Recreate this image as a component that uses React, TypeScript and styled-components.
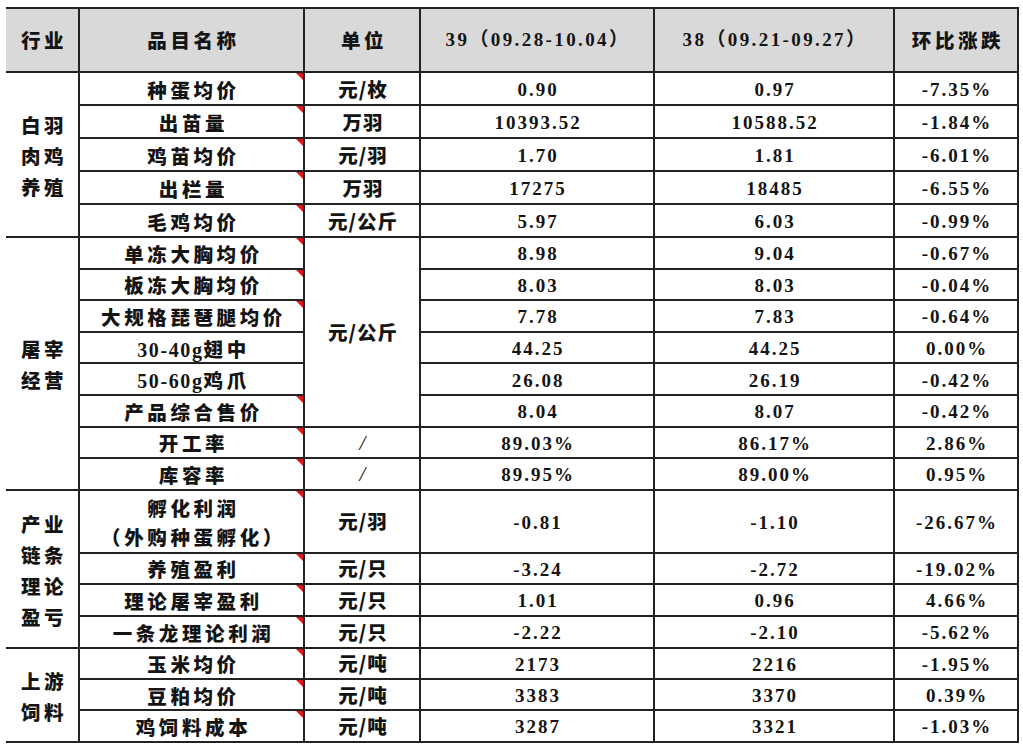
import React from "react";
import styled, { createGlobalStyle } from "styled-components";

const GlobalStyle = createGlobalStyle`
  html, body { margin: 0; padding: 0; background: #ffffff; }
  body { font-family: "Liberation Serif", "Noto Sans CJK SC", serif; }
`;

const Page = styled.div`
  padding: 7px 6px 0 6px;
  width: 1023px;
  box-sizing: border-box;
`;

const Table = styled.table`
  border-collapse: collapse;
  table-layout: fixed;
  width: 1012px;
  color: #141414;
`;

const HeadCell = styled.th<{ $cjk?: boolean }>`
  background: #d9d9d9;
  height: 62px;
  border-top: 2px solid #222;
  border-bottom: 2px solid #222;
  border-left: 2px solid #222;
  padding: ${(p) => (p.$cjk ? "0 0 0 4px" : "0 0 0 2px")};
  line-height: 24px;
  font-weight: ${(p) => (p.$cjk ? 900 : 700)};
  font-size: ${(p) => (p.$cjk ? "19.5px" : "19px")};
  letter-spacing: ${(p) => (p.$cjk ? "3.6px" : "2.4px")};
  font-family: ${(p) =>
    p.$cjk ? `"Noto Sans CJK SC", sans-serif` : `"Liberation Serif", "Noto Sans CJK SC", serif`};
  text-align: center;
  &:first-child { border-left: none; }
  &:last-child { border-right: 2px solid #222; }
`;

const Row = styled.tr<{ $h: number }>`
  height: ${(p) => p.$h}px;
`;

const GroupCell = styled.td`
  border-bottom: 2px solid #222;
  padding: 2px 0 0 4px;
  text-align: center;
  vertical-align: middle;
  font-family: "Noto Sans CJK SC", sans-serif;
  font-weight: 900;
  font-size: 19.5px;
  letter-spacing: 3.6px;
  line-height: 31px;
`;

const NameCell = styled.td<{ $double?: boolean }>`
  position: relative;
  border: 2px solid #222;
  padding: 2px 0 0 4px;
  text-align: center;
  vertical-align: middle;
  font-family: "Noto Sans CJK SC", sans-serif;
  font-weight: 900;
  font-size: 19.5px;
  letter-spacing: 3.6px;
  line-height: ${(p) => (p.$double ? "29px" : "24px")};
  white-space: nowrap;
`;

const Latin = styled.span`
  font-family: "Liberation Serif", serif;
  font-weight: 700;
  font-size: 20px;
  letter-spacing: 1.6px;
  line-height: 20px;
`;

const Mark = styled.span`
  position: absolute;
  top: 0;
  right: 0;
  width: 0;
  height: 0;
  border-top: 7px solid #e0161c;
  border-left: 7px solid transparent;
`;

const UnitCell = styled.td`
  border: 2px solid #222;
  padding: 2px 0 0 2px;
  text-align: center;
  vertical-align: middle;
  white-space: nowrap;
  font-size: 19.5px;
  line-height: 24px;
`;

const UnitText = styled.span<{ $slash?: boolean }>`
  font-family: ${(p) => (p.$slash ? `"Liberation Serif", serif` : `"Noto Sans CJK SC", sans-serif`)};
  font-weight: ${(p) => (p.$slash ? 400 : 900)};
  font-size: ${(p) => (p.$slash ? "21px" : "19.5px")};
  font-style: ${(p) => (p.$slash ? "italic" : "normal")};
  letter-spacing: 1px;
`;

const NumCell = styled.td`
  border: 2px solid #222;
  padding: 3px 0 0 2px;
  text-align: center;
  vertical-align: middle;
  font-family: "Liberation Serif", serif;
  font-weight: 700;
  font-size: 19px;
  line-height: 22px;
  letter-spacing: 2px;
  white-space: nowrap;
`;

type Item = {
  name: React.ReactNode;
  unit?: string;
  unitSpan?: number;
  a: string;
  b: string;
  c: string;
  mark: boolean;
  h: number;
  double?: boolean;
};

type Group = { label: string[]; items: Item[] };

const groups: Group[] = [
  {
    label: ["白羽", "肉鸡", "养殖"],
    items: [
      { name: "种蛋均价", unit: "元/枚", a: "0.90", b: "0.97", c: "-7.35%", mark: true, h: 33 },
      { name: "出苗量", unit: "万羽", a: "10393.52", b: "10588.52", c: "-1.84%", mark: true, h: 33 },
      { name: "鸡苗均价", unit: "元/羽", a: "1.70", b: "1.81", c: "-6.01%", mark: true, h: 33 },
      { name: "出栏量", unit: "万羽", a: "17275", b: "18485", c: "-6.55%", mark: true, h: 33 },
      { name: "毛鸡均价", unit: "元/公斤", a: "5.97", b: "6.03", c: "-0.99%", mark: true, h: 33 },
    ],
  },
  {
    label: ["屠宰", "经营"],
    items: [
      { name: "单冻大胸均价", unit: "元/公斤", unitSpan: 6, a: "8.98", b: "9.04", c: "-0.67%", mark: true, h: 31.6 },
      { name: "板冻大胸均价", a: "8.03", b: "8.03", c: "-0.04%", mark: true, h: 31.6 },
      { name: "大规格琵琶腿均价", a: "7.78", b: "7.83", c: "-0.64%", mark: true, h: 31.6 },
      { name: <><Latin>30-40g</Latin>翅中</>, a: "44.25", b: "44.25", c: "0.00%", mark: false, h: 31.6 },
      { name: <><Latin>50-60g</Latin>鸡爪</>, a: "26.08", b: "26.19", c: "-0.42%", mark: false, h: 31.6 },
      { name: "产品综合售价", a: "8.04", b: "8.07", c: "-0.42%", mark: true, h: 31.6 },
      { name: "开工率", unit: "/", a: "89.03%", b: "86.17%", c: "2.86%", mark: true, h: 31.6 },
      { name: "库容率", unit: "/", a: "89.95%", b: "89.00%", c: "0.95%", mark: true, h: 31.6 },
    ],
  },
  {
    label: ["产业", "链条", "理论", "盈亏"],
    items: [
      {
        name: (
          <>
            孵化利润
            <br />
            （外购种蛋孵化）
          </>
        ),
        unit: "元/羽",
        a: "-0.81",
        b: "-1.10",
        c: "-26.67%",
        mark: true,
        h: 63,
        double: true,
      },
      { name: "养殖盈利", unit: "元/只", a: "-3.24", b: "-2.72", c: "-19.02%", mark: true, h: 31 },
      { name: "理论屠宰盈利", unit: "元/只", a: "1.01", b: "0.96", c: "4.66%", mark: true, h: 32 },
      { name: "一条龙理论利润", unit: "元/只", a: "-2.22", b: "-2.10", c: "-5.62%", mark: true, h: 32 },
    ],
  },
  {
    label: ["上游", "饲料"],
    items: [
      { name: "玉米均价", unit: "元/吨", a: "2173", b: "2216", c: "-1.95%", mark: true, h: 31.3 },
      { name: "豆粕均价", unit: "元/吨", a: "3383", b: "3370", c: "0.39%", mark: true, h: 31.3 },
      { name: "鸡饲料成本", unit: "元/吨", a: "3287", b: "3321", c: "-1.03%", mark: true, h: 31.3 },
    ],
  },
];

export default function App() {
  return (
    <>
      <GlobalStyle />
      <Page>
        <Table>
          <colgroup>
            <col style={{ width: 73 }} />
            <col style={{ width: 225 }} />
            <col style={{ width: 116 }} />
            <col style={{ width: 234 }} />
            <col style={{ width: 240 }} />
            <col style={{ width: 124 }} />
          </colgroup>
          <thead>
            <tr>
              <HeadCell $cjk>行业</HeadCell>
              <HeadCell $cjk>品目名称</HeadCell>
              <HeadCell $cjk>单位</HeadCell>
              <HeadCell>39（09.28-10.04）</HeadCell>
              <HeadCell>38（09.21-09.27）</HeadCell>
              <HeadCell $cjk>环比涨跌</HeadCell>
            </tr>
          </thead>
          <tbody>
            {groups.map((g) =>
              g.items.map((it, i) => (
                <Row key={g.label.join("") + i} $h={it.h}>
                  {i === 0 && (
                    <GroupCell rowSpan={g.items.length}>
                      {g.label.map((l, k) => (
                        <React.Fragment key={k}>
                          {k > 0 && <br />}
                          {l}
                        </React.Fragment>
                      ))}
                    </GroupCell>
                  )}
                  <NameCell $double={it.double}>
                    {it.name}
                    {it.mark && <Mark />}
                  </NameCell>
                  {it.unit !== undefined && (
                    <UnitCell rowSpan={it.unitSpan ?? 1}>
                      <UnitText $slash={it.unit === "/"}>{it.unit}</UnitText>
                    </UnitCell>
                  )}
                  <NumCell>{it.a}</NumCell>
                  <NumCell>{it.b}</NumCell>
                  <NumCell>{it.c}</NumCell>
                </Row>
              ))
            )}
          </tbody>
        </Table>
      </Page>
    </>
  );
}
